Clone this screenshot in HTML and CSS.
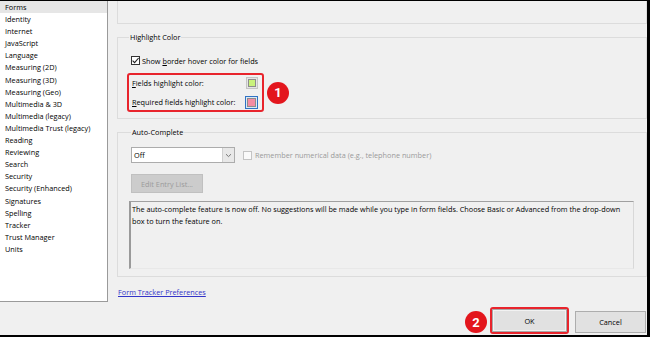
FILE: index.html
```html
<!DOCTYPE html>
<html>
<head>
<meta charset="utf-8">
<link rel="stylesheet" href="styles.css">
</head>
<body>
<div class="frame">
  <div class="top">
    <ul class="sidebar">
      <li class="sel">Forms</li>
      <li>Identity</li>
      <li>Internet</li>
      <li>JavaScript</li>
      <li>Language</li>
      <li>Measuring (2D)</li>
      <li>Measuring (3D)</li>
      <li>Measuring (Geo)</li>
      <li>Multimedia &amp; 3D</li>
      <li>Multimedia (legacy)</li>
      <li>Multimedia Trust (legacy)</li>
      <li>Reading</li>
      <li>Reviewing</li>
      <li>Search</li>
      <li>Security</li>
      <li>Security (Enhanced)</li>
      <li>Signatures</li>
      <li>Spelling</li>
      <li>Tracker</li>
      <li>Trust Manager</li>
      <li>Units</li>
    </ul>
    <div class="main">
      <div class="group-top"></div>
      <fieldset class="group highlight">
        <legend>Highlight Color</legend>
        <label class="check-row"><span class="cb checked"><svg width="9" height="9" viewBox="0 0 9 9"><path d="M1.6 4.6 L3.6 6.6 L7.6 2" fill="none" stroke="#222" stroke-width="1.1"/></svg></span><span>Show <u>b</u>order hover color for fields</span></label>
        <div class="callout-row">
          <div class="callout">
            <div class="color-row"><span><u>F</u>ields highlight color:</span><span class="swatch"><span class="fill green"></span></span></div>
            <div class="color-row"><span><u>R</u>equired fields highlight color:</span><span class="swatch active"><span class="fill pink"></span></span></div>
          </div>
          <span class="badge">1</span>
        </div>
      </fieldset>
      <fieldset class="group auto">
        <legend>Auto-Complete</legend>
        <div class="ac-row">
          <div class="select"><span class="val">Off</span><span class="arrow"><svg width="7" height="5" viewBox="0 0 7 5"><path d="M1 1.2 L3.5 3.6 L6 1.2" fill="none" stroke="#777" stroke-width="1"/></svg></span></div>
          <span class="cb disabled"></span><span class="dis-text">Remember numerical data (e.g., telephone number)</span>
        </div>
        <div class="btn-dis">Edit Entry List...</div>
        <div class="info">The auto-complete feature is now off. No suggestions will be made while you type in form fields. Choose Basic or Advanced from the drop-down box to turn the feature on.</div>
      </fieldset>
      <a class="link" href="#">Form Tracker Preferences</a>
    </div>
  </div>
  <div class="bottom">
    <span class="badge b2">2</span>
    <span class="ok-wrap"><span class="btn ok">OK</span></span>
    <span class="btn cancel">Cancel</span>
  </div>
</div>
</body>
</html>
```
FILE: styles.css
```css
* { box-sizing: border-box; }
html, body { margin: 0; padding: 0; }
body { background: #f0f0f0; font-family: "Open Sans", "Noto Sans", sans-serif; font-size: 7.3px; color: #000; }
.frame { width: 650px; height: 337px; border-top: 1px solid #000; border-right: 3px solid #000; border-bottom: 2px solid #000; display: flex; flex-direction: column; overflow: hidden; }
.top { height: 301px; display: flex; }
.sidebar { list-style: none; margin: 0; padding: 0; width: 108px; height: 301px; background: #fff; border-right: 1px solid #9a9a9a; border-bottom: 1px solid #9a9a9a; }
.sidebar li { line-height: 12.1px; height: 12.1px; padding-left: 5px; white-space: nowrap; }
.sidebar li.sel { background: #e6e6e6; }
.main { flex: 1; padding-left: 9px; display: flex; flex-direction: column; }
.group-top { height: 23px; border: 1px solid #dcdcdc; border-top: none; }
.group { margin: 0; border: 1px solid #dcdcdc; padding: 0 0 0 9px; min-width: 0; }
.group legend { padding: 0 1px; margin-left: 2px; line-height: 8px; height: 8px; }
.highlight { margin-top: 9px; height: 86px; }
.check-row { display: flex; align-items: center; margin-top: 14px; margin-left: 4px; height: 11px; }
.cb { width: 9px; height: 9px; border: 1px solid #333; background: #fff; margin-right: 2px; display: inline-flex; }
.cb svg { margin: -1px; }
.callout-row { display: flex; align-items: center; margin-top: 7px; }
.callout { width: 137px; border: 2px solid #e8242c; border-radius: 3px; padding: 2px 4px 2px 3px; display: flex; flex-direction: column; gap: 7px; }
.color-row { display: flex; justify-content: space-between; align-items: center; height: 12px; }
.swatch { width: 12px; height: 12px; border: 1px solid #c4c4c4; background: #e4e4e4; padding: 1px; display: inline-flex; }
.swatch.active { border-color: #2f73c4; background: #dce8f5; width: 13px; height: 13px; }
.fill { flex: 1; border: 1px solid #8c8c8c; }
.fill.green { background: #c9f27c; }
.fill.pink { background: #f58ca3; }
.badge { width: 22px; height: 22px; border-radius: 50%; background: #e3161d; color: #fff; font-family: "Roboto", "Open Sans", sans-serif; font-weight: 700; font-size: 13px; display: inline-flex; align-items: center; justify-content: center; margin-left: 3px; }
.auto { margin-top: 9px; height: 149px; padding-left: 11px; }
.ac-row { display: flex; align-items: center; margin-top: 11px; margin-left: 2px; }
.select { width: 104px; height: 16px; border: 1px solid #acacac; background: #fff; display: flex; }
.select .val { flex: 1; padding-left: 2px; line-height: 14px; }
.select .arrow { width: 12px; background: #e8e8e8; border-left: 1px solid #d0d0d0; display: flex; align-items: center; justify-content: center; }
.cb.disabled { border-color: #c4c4c4; background: #fafafa; margin-left: 8px; margin-right: 3px; }
.dis-text { color: #9a9a9a; }
.btn-dis { width: 72px; height: 19px; margin: 11px 0 0 2px; background: #cccccc; border: 1px solid #c0c0c0; color: #9b9b9b; display: flex; align-items: center; justify-content: center; }
.info { width: 505px; height: 68px; margin-top: 8px; border-top: 1px solid #a0a0a0; border-left: 2px solid #9a9a9a; border-right: 1px solid #d8d8d8; border-bottom: 1px solid #e8e8e8; padding: 1px 4px 0 1px; line-height: 12px; }
.link { margin-top: 9px; margin-left: 1px; color: #3434c8; text-decoration: underline; line-height: 12px; align-self: flex-start; }
.bottom { height: 33px; display: flex; justify-content: flex-end; align-items: flex-end; padding: 0 1px 1px 0; }
.badge.b2 { margin: 0 3px 1px 0; }
.ok-wrap { border: 2px solid #e8242c; border-radius: 3px; display: inline-flex; }
.btn { background: #e1e1e1; border: 1px solid #adadad; display: inline-flex; align-items: center; justify-content: center; }
.ok { width: 75px; height: 23px; border-color: #a8a8a8; box-shadow: inset 0 0 0 1px #f2f2f2; }
.cancel { width: 71px; height: 22px; margin: 0 0 1px 6px; }
```
